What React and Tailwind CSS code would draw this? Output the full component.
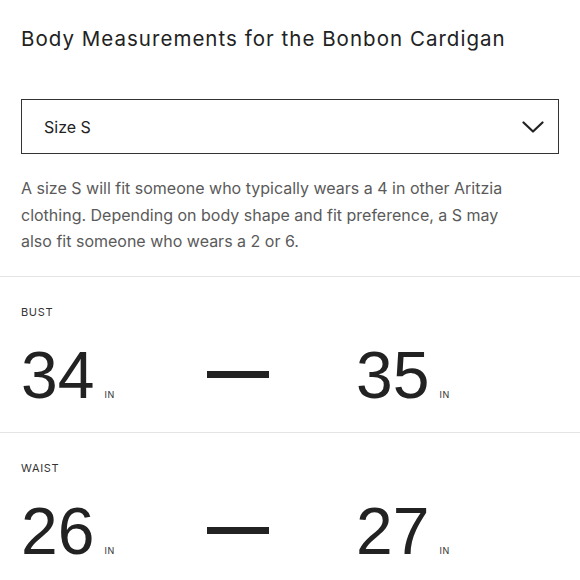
import React from 'react';

const BODY_FONT = "font-['Inter',_'Liberation_Sans',_sans-serif]";
const NUM_FONT = "font-['Liberation_Sans',_Arial,_sans-serif]";

const MEASUREMENTS = [
  { label: 'BUST', min: 34, max: 35 },
  { label: 'WAIST', min: 26, max: 27 },
];

function Value({ value }) {
  return (
    <div className="flex items-baseline">
      <span className={`${NUM_FONT} text-[66px] leading-[66px] text-[#222]`}>{value}</span>
      <span className={`${BODY_FONT} ml-[10px] text-[9px] tracking-[0.08em] text-[#333]`}>IN</span>
    </div>
  );
}

function MeasurementRow({ label, min, max }) {
  return (
    <section className="border-t border-[#e4e4e4] px-[21px] pt-[27px] pb-[24px]">
      <p className={`${BODY_FONT} text-[11px] leading-[16px] tracking-[0.06em] text-[#333]`}>{label}</p>
      <div className="mt-[22px] flex items-center">
        <div className="w-[186px]">
          <Value value={min} />
        </div>
        <div className="h-[7px] w-[62px] bg-[#222]" />
        <div className="ml-[87px]">
          <Value value={max} />
        </div>
      </div>
    </section>
  );
}

export default function App() {
  return (
    <div className={`${BODY_FONT} w-[580px] h-[580px] overflow-hidden bg-white`}>
      <div className="px-[21px] pt-[25px]">
        <h2 className="text-[20.5px] leading-[28px] tracking-[0.05em] text-[#222]">
          Body Measurements for the Bonbon Cardigan
        </h2>

        {/* Size picker */}
        <button className="mt-[46px] flex h-[55px] w-[538px] items-center justify-between border-[1.5px] border-[#333] pl-[22px] pr-[14px] text-left">
          <span className="text-[16px] text-[#222]">Size S</span>
          <svg width="22" height="12" viewBox="0 0 22 12" fill="none" stroke="#222" strokeWidth="2.2" strokeLinecap="round" strokeLinejoin="round">
            <path d="M1.5 1.5 11 10.5 20.5 1.5" />
          </svg>
        </button>

        <p className="mt-[21px] w-[503px] pb-[21px] text-[16px] leading-[26.5px] text-[#5a5a5a]">
          A size S will fit someone who typically wears a 4 in other Aritzia clothing. Depending on body shape and fit
          preference, a S may also fit someone who wears a 2 or 6.
        </p>
      </div>

      {MEASUREMENTS.map((m) => (
        <MeasurementRow key={m.label} {...m} />
      ))}
    </div>
  );
}
